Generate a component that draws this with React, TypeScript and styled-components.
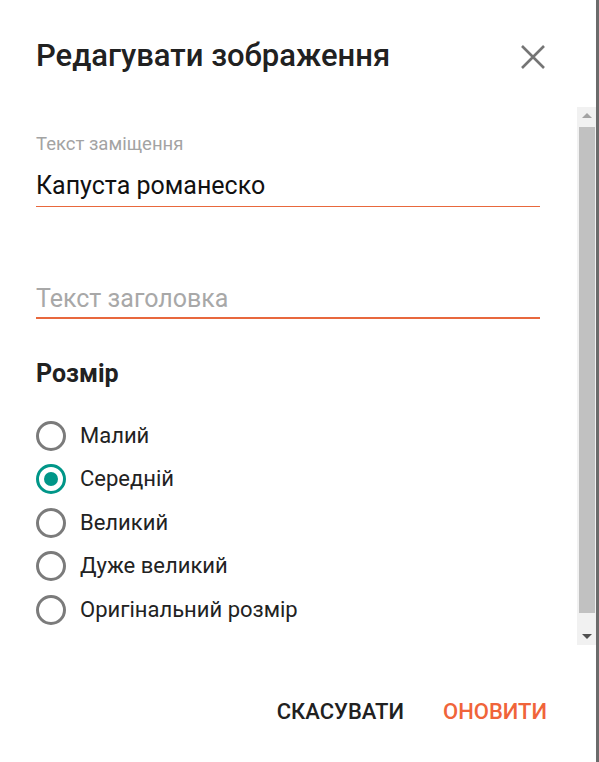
import React, { useState } from 'react'
import styled, { createGlobalStyle } from 'styled-components'

const GlobalStyle = createGlobalStyle`
  html, body {
    margin: 0;
    padding: 0;
    background: #6b6b6b;
  }
  body {
    font-family: Roboto, 'Noto Sans', sans-serif;
  }
`

const ACCENT = '#e8683d'
const TEAL = '#009688'

const Dialog = styled.div`
  box-sizing: border-box;
  width: 596px;
  height: 762px;
  background: #fff;
  display: flex;
  flex-direction: column;
`

const Header = styled.div`
  flex: 0 0 107px;
  box-sizing: border-box;
  padding: 38px 36px 0 36px;
  display: flex;
  justify-content: space-between;
  align-items: flex-start;
`

const Title = styled.h1`
  margin: 0;
  font-size: 31px;
  line-height: 36px;
  font-weight: 500;
  color: #212121;
`

const CloseButton = styled.button`
  margin: 7px 15px 0 0;
  padding: 0;
  border: none;
  background: none;
  width: 24px;
  height: 24px;
  cursor: pointer;
  display: flex;
`

const Body = styled.div`
  flex: 0 0 538px;
  display: flex;
  min-height: 0;
`

const Content = styled.div`
  flex: 1;
  overflow: hidden;
  box-sizing: border-box;
  padding: 26px 37px 0 36px;
`

const ScrollBar = styled.div`
  flex: 0 0 19px;
  display: flex;
  flex-direction: column;
  background: #f1f1f1;
`

const ScrollArrow = styled.div<{ $down?: boolean }>`
  flex: 0 0 17px;
  display: flex;
  align-items: center;
  justify-content: center;

  &::before {
    content: '';
    width: 0;
    height: 0;
    border-left: 5px solid transparent;
    border-right: 5px solid transparent;
    ${(p) =>
      p.$down ? 'border-top: 5px solid #505050;' : 'border-bottom: 5px solid #a3a3a3;'}
  }
`

const ScrollTrack = styled.div`
  flex: 1;
  padding: 3px 1px 0 2px;
`

const ScrollThumb = styled.div`
  height: 486px;
  background: #c1c1c1;
`

const Field = styled.div<{ $gap: number }>`
  display: flex;
  flex-direction: column;
  margin-top: ${(p) => p.$gap}px;
`

const FieldLabel = styled.label`
  font-size: 18.5px;
  line-height: 22px;
  color: #a3a3a3;
  margin-bottom: 15px;
`

const TextInput = styled.input<{ $focused?: boolean }>`
  box-sizing: border-box;
  width: 100%;
  border: none;
  outline: none;
  margin: 0;
  padding: 0 0 ${(p) => (p.$focused ? 4 : 6)}px 0;
  height: ${(p) => (p.$focused ? 36 : 37)}px;
  font-family: Roboto, sans-serif;
  font-size: 25px;
  line-height: 30px;
  color: #111;
  background: transparent;
  border-bottom: ${(p) => (p.$focused ? 2 : 1)}px solid ${ACCENT};

  &::placeholder {
    color: #a8a8a8;
  }
`

const SectionTitle = styled.h2`
  margin: 40px 0 0 0;
  font-size: 25px;
  line-height: 30px;
  font-weight: 700;
  color: #212121;
`

const RadioList = styled.div`
  margin-top: 25px;
  display: flex;
  flex-direction: column;
`

const RadioRow = styled.label`
  display: flex;
  align-items: center;
  height: 43.5px;
  gap: 14px;
  cursor: pointer;
`

const RadioCircle = styled.span<{ $checked: boolean }>`
  box-sizing: border-box;
  flex: 0 0 30px;
  height: 30px;
  border-radius: 50%;
  border: 3px solid ${(p) => (p.$checked ? TEAL : '#7b7b7b')};
  display: flex;
  align-items: center;
  justify-content: center;

  &::after {
    content: '';
    width: 14px;
    height: 14px;
    border-radius: 50%;
    background: ${TEAL};
    display: ${(p) => (p.$checked ? 'block' : 'none')};
  }
`

const RadioText = styled.span`
  font-size: 22px;
  line-height: 26px;
  color: #222;
`

const Footer = styled.div`
  flex: 0 0 117px;
  box-sizing: border-box;
  padding: 46px 41px 0 0;
  display: flex;
  justify-content: flex-end;
  align-items: flex-start;
  gap: 23px;
`

const ActionButton = styled.button<{ $primary?: boolean }>`
  border: none;
  background: none;
  padding: 8px;
  font-family: Roboto, sans-serif;
  font-size: 22px;
  line-height: 26px;
  font-weight: 500;
  text-transform: uppercase;
  color: ${(p) => (p.$primary ? '#f0643a' : '#212121')};
  cursor: pointer;
`

const sizes = ['Малий', 'Середній', 'Великий', 'Дуже великий', 'Оригінальний розмір']

export default function App() {
  const [size, setSize] = useState(1)
  const [alt, setAlt] = useState('Капуста романеско')
  const [caption, setCaption] = useState('')

  return (
    <>
      <GlobalStyle />
      <Dialog>
        <Header>
          <Title>Редагувати зображення</Title>
          <CloseButton aria-label="Закрити">
            <svg width="24" height="24" viewBox="0 0 24 24">
              <path d="M1 1L23 23M23 1L1 23" stroke="#757575" strokeWidth="2.6" />
            </svg>
          </CloseButton>
        </Header>
        <Body>
          <Content>
            <Field $gap={0}>
              <FieldLabel>Текст заміщення</FieldLabel>
              <TextInput value={alt} onChange={(e) => setAlt(e.target.value)} />
            </Field>
            <Field $gap={76}>
              <TextInput
                $focused
                placeholder="Текст заголовка"
                value={caption}
                onChange={(e) => setCaption(e.target.value)}
              />
            </Field>
            <SectionTitle>Розмір</SectionTitle>
            <RadioList>
              {sizes.map((s, i) => (
                <RadioRow key={s} onClick={() => setSize(i)}>
                  <RadioCircle $checked={size === i} />
                  <RadioText>{s}</RadioText>
                </RadioRow>
              ))}
            </RadioList>
          </Content>
          <ScrollBar>
            <ScrollArrow />
            <ScrollTrack>
              <ScrollThumb />
            </ScrollTrack>
            <ScrollArrow $down />
          </ScrollBar>
        </Body>
        <Footer>
          <ActionButton>Скасувати</ActionButton>
          <ActionButton $primary>Оновити</ActionButton>
        </Footer>
      </Dialog>
    </>
  )
}
